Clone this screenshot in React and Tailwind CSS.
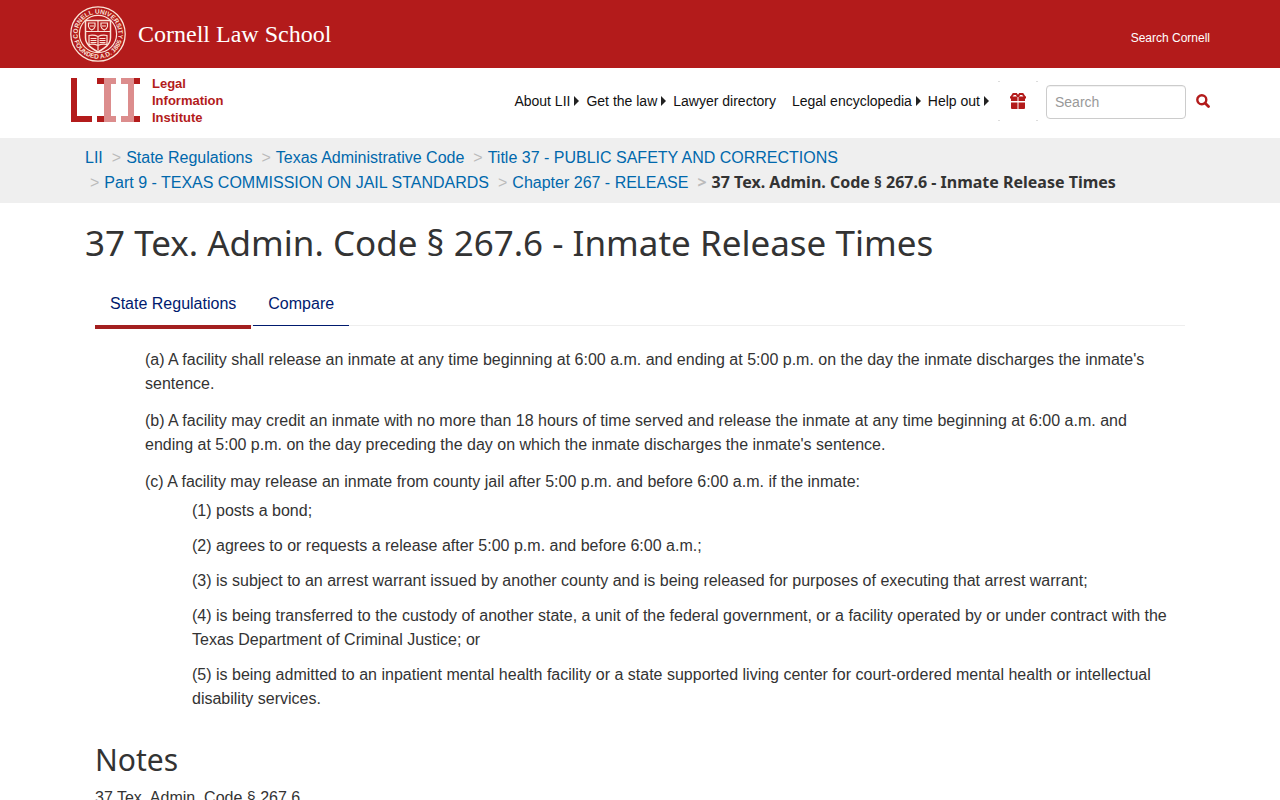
const navItems = [
  { label: 'About LII', menu: true },
  { label: 'Get the law', menu: true },
  { label: 'Lawyer directory', menu: false },
  { label: 'Legal encyclopedia', menu: true },
  { label: 'Help out', menu: true },
];

const crumbs = [
  'LII',
  'State Regulations',
  'Texas Administrative Code',
  'Title 37 - PUBLIC SAFETY AND CORRECTIONS',
  'Part 9 - TEXAS COMMISSION ON JAIL STANDARDS',
  'Chapter 267 - RELEASE',
];

const conditions = [
  '(1) posts a bond;',
  '(2) agrees to or requests a release after 5:00 p.m. and before 6:00 a.m.;',
  '(3) is subject to an arrest warrant issued by another county and is being released for purposes of executing that arrest warrant;',
  '(4) is being transferred to the custody of another state, a unit of the federal government, or a facility operated by or under contract with the Texas Department of Criminal Justice; or',
  '(5) is being admitted to an inpatient mental health facility or a state supported living center for court-ordered mental health or intellectual disability services.',
];

function Seal() {
  return (
    <svg viewBox="0 0 56 56" className="size-14" fill="none" stroke="#fbe3d6" aria-hidden="true">
      <defs>
        <path id="seal-top" d="M9.6 36.6A20.3 20.3 0 1 1 46.4 36.6" />
        <path id="seal-bottom" d="M3.6 32.3A24.8 24.8 0 0 0 52.4 32.3" />
      </defs>
      <circle cx="28" cy="28" r="27.2" strokeWidth="1.3" />
      <circle cx="28" cy="28" r="18.6" strokeWidth="1.2" />
      <g fill="#fbe3d6" stroke="none" fontSize="6.5" fontWeight="700" fontFamily="Liberation Sans, sans-serif">
        <text textAnchor="middle">
          <textPath href="#seal-top" startOffset="50%">CORNELL UNIVERSITY</textPath>
        </text>
        <text textAnchor="middle">
          <textPath href="#seal-bottom" startOffset="50%">FOUNDED A.D. 1865</textPath>
        </text>
      </g>
      <path d="M15.5 14.5h25v17c0 7-5.5 10.5-12.5 14.5c-7-4-12.5-7.5-12.5-14.5z" strokeWidth="1.5" />
      <path d="M15.5 25.5h25M28 14.5v11" strokeWidth="1.2" />
      <path d="M18.5 17h6.5v3.500q-.5 2.500-3.200 3.500q-2.800-1-3.300-3.500zM31 17h6.500v3.500q-.5 2.500-3.200 3.500q-2.800-1-3.300-3.500z" strokeWidth="1.2" />
      <path d="M20 20h4M32 20h4" />
      <path d="M19 29.5q5-1 9 1q4-2 9-1v9q-5-1-9 1q-4-2-9-1zM28 30.5v14" strokeWidth="1.2" />
      <path d="M20.5 32.5h6M20.5 34.5h6M20.5 36.5h6M29.5 32.5h6M29.5 34.5h6M29.5 36.5h6" />
    </svg>
  );
}

function LiiMark() {
  return (
    <svg viewBox="0 0 70 44" className="h-11 w-[70px]" aria-hidden="true">
      <path fill="#b31b1b" d="M1 0h6v38h15v6H1zM27 0h7v6h-7zM27 38h7v6h-7zM64 0h6v6h-6zM64 38h6v6h-6z" />
      <path fill="#dc8d8d" d="M34 0h12v6h-5v32h5v6H34zM51 0h13v44H51v-6h7V6h-7z" />
    </svg>
  );
}

function GiftIcon() {
  return (
    <svg viewBox="0 0 40 40" className="size-10" fill="#b31b1b" aria-hidden="true">
      <path fill="#ddd" d="M0 0h2v1H0zM38 0h2v1h-2zM0 39h2v1H0zM38 39h2v1h-2z" />
      <path d="M12 15.5h7.500V20h-6.500v-2.500h-1zM20.500 15.5H28v2h-1V20h-6.500zM13 21.5h6.500V28h-5.500a1 1 0 0 1-1-1zM20.500 21.5H27V27a1 1 0 0 1-1 1h-5.500z" />
      <path fill="none" stroke="#b31b1b" strokeWidth="1.9" d="M20 15.5l-1.700-2.500h-3l-2.300 3.500M20 15.5l1.700-2.500h3l2.300 3.500" />
    </svg>
  );
}

function SearchIcon() {
  return (
    <svg viewBox="0 0 14 14" className="size-3.5" fill="none" stroke="#b31b1b" aria-hidden="true">
      <circle cx="5.8" cy="5.8" r="4.5" strokeWidth="2.4" />
      <path d="M9 9l3.5 3.5" strokeWidth="2.8" strokeLinecap="round" />
    </svg>
  );
}

export default function App() {
  return (
    <div className="min-h-screen bg-white font-['Liberation_Sans',Arial,sans-serif] text-base text-[#333]">
      <div className="bg-[#b31b1b]">
        <div className="mx-auto flex h-[68px] max-w-[1140px] items-center justify-between text-white">
          <a href="#cornell" className="flex items-center gap-3">
            <Seal />
            <span className="font-['Liberation_Serif',serif] text-2xl">Cornell Law School</span>
          </a>
          <a href="#search-cornell" className="pt-2 text-xs">Search Cornell</a>
        </div>
      </div>

      <header className="mx-auto flex h-[70px] max-w-[1140px] items-center justify-between pb-0.5">
        <a href="#lii" className="flex items-center gap-3 pb-1">
          <LiiMark />
          <span className="text-[13px] leading-[17px] font-bold text-[#b31b1b]">
            Legal<br />Information<br />Institute
          </span>
        </a>
        <div className="flex items-center">
          <nav className="flex items-center gap-1.5 pb-0.5 text-sm text-[#111]">
            {navItems.map((item) => (
              <a key={item.label} href="#nav" className="flex items-center gap-1">
                {item.label}
                {item.menu ? (
                  <svg viewBox="0 0 6 10" className="h-2.5 w-1.5" fill="#222" aria-hidden="true">
                    <path d="M0 0l5 5-5 5z" />
                  </svg>
                ) : (
                  <span className="w-1.5" />
                )}
              </a>
            ))}
          </nav>
          <button type="button" aria-label="Donate" className="mx-2 mb-0.5">
            <GiftIcon />
          </button>
          <form className="flex items-center">
            <input
              type="text"
              placeholder="Search"
              aria-label="Search"
              className="h-[34px] w-[140px] rounded border border-[#ccc] px-2 text-sm inset-shadow-2xs placeholder:text-[#999]"
            />
            <button type="button" aria-label="Submit search" className="mb-0.5 pl-2.5">
              <SearchIcon />
            </button>
          </form>
        </div>
      </header>

      <div className="bg-[#efefef]">
        <nav aria-label="Breadcrumb" className="mx-auto max-w-[1140px] px-[15px] pt-[7px] pb-2">
          <ol className="leading-[25px]">
            {crumbs.map((crumb, i) => (
              <li key={crumb} className="mr-1 inline-block">
                {i > 0 && <span className="px-[5px] text-[#bbb]">&gt;</span>}
                <a href="#crumb" className="text-[#0068ac]">{crumb}</a>
              </li>
            ))}
            <li className="inline-block font-['Noto_Sans',sans-serif] font-bold">
              <span className="px-[5px] text-[#bbb]">&gt;</span>
              37 Tex. Admin. Code § 267.6 - Inmate Release Times
            </li>
          </ol>
        </nav>
      </div>

      <main className="mx-auto max-w-[1140px] px-[15px]">
        <h1 className="pt-5 font-['Noto_Sans',sans-serif] text-[35px] leading-10">
          37 Tex. Admin. Code § 267.6 - Inmate Release Times
        </h1>

        <div className="px-2.5 pt-[18px]">
          <div role="tablist" className="flex items-start gap-0.5 border-b border-[#eee]">
            <button type="button" role="tab" aria-selected="true" className="-mb-1 border-b-4 border-[#a31f1f] px-[15px] pt-[11px] pb-[9px] text-[#001a6e]">
              State Regulations
            </button>
            <button type="button" role="tab" aria-selected="false" className="-mb-px border-b border-[#001a6e] px-[15px] pt-[11px] pb-[9px] text-[#001a6e]">
              Compare
            </button>
          </div>

          <div className="space-y-[13px] pt-[22px] pr-[15px] pl-[50px]">
            <p>(a) A facility shall release an inmate at any time beginning at 6:00 a.m. and ending at 5:00 p.m. on the day the inmate discharges the inmate's sentence.</p>
            <p>(b) A facility may credit an inmate with no more than 18 hours of time served and release the inmate at any time beginning at 6:00 a.m. and ending at 5:00 p.m. on the day preceding the day on which the inmate discharges the inmate's sentence.</p>
            <div>
              <p>(c) A facility may release an inmate from county jail after 5:00 p.m. and before 6:00 a.m. if the inmate:</p>
              <div className="space-y-[11px] pt-[5px] pl-[47px]">
                {conditions.map((text) => (
                  <p key={text}>{text}</p>
                ))}
              </div>
            </div>
          </div>

          <h2 className="pt-[29px] font-['Noto_Sans',sans-serif] text-3xl leading-10">Notes</h2>
          <p className="pt-1.5">37 Tex. Admin. Code § 267.6</p>
        </div>
      </main>
    </div>
  );
}
